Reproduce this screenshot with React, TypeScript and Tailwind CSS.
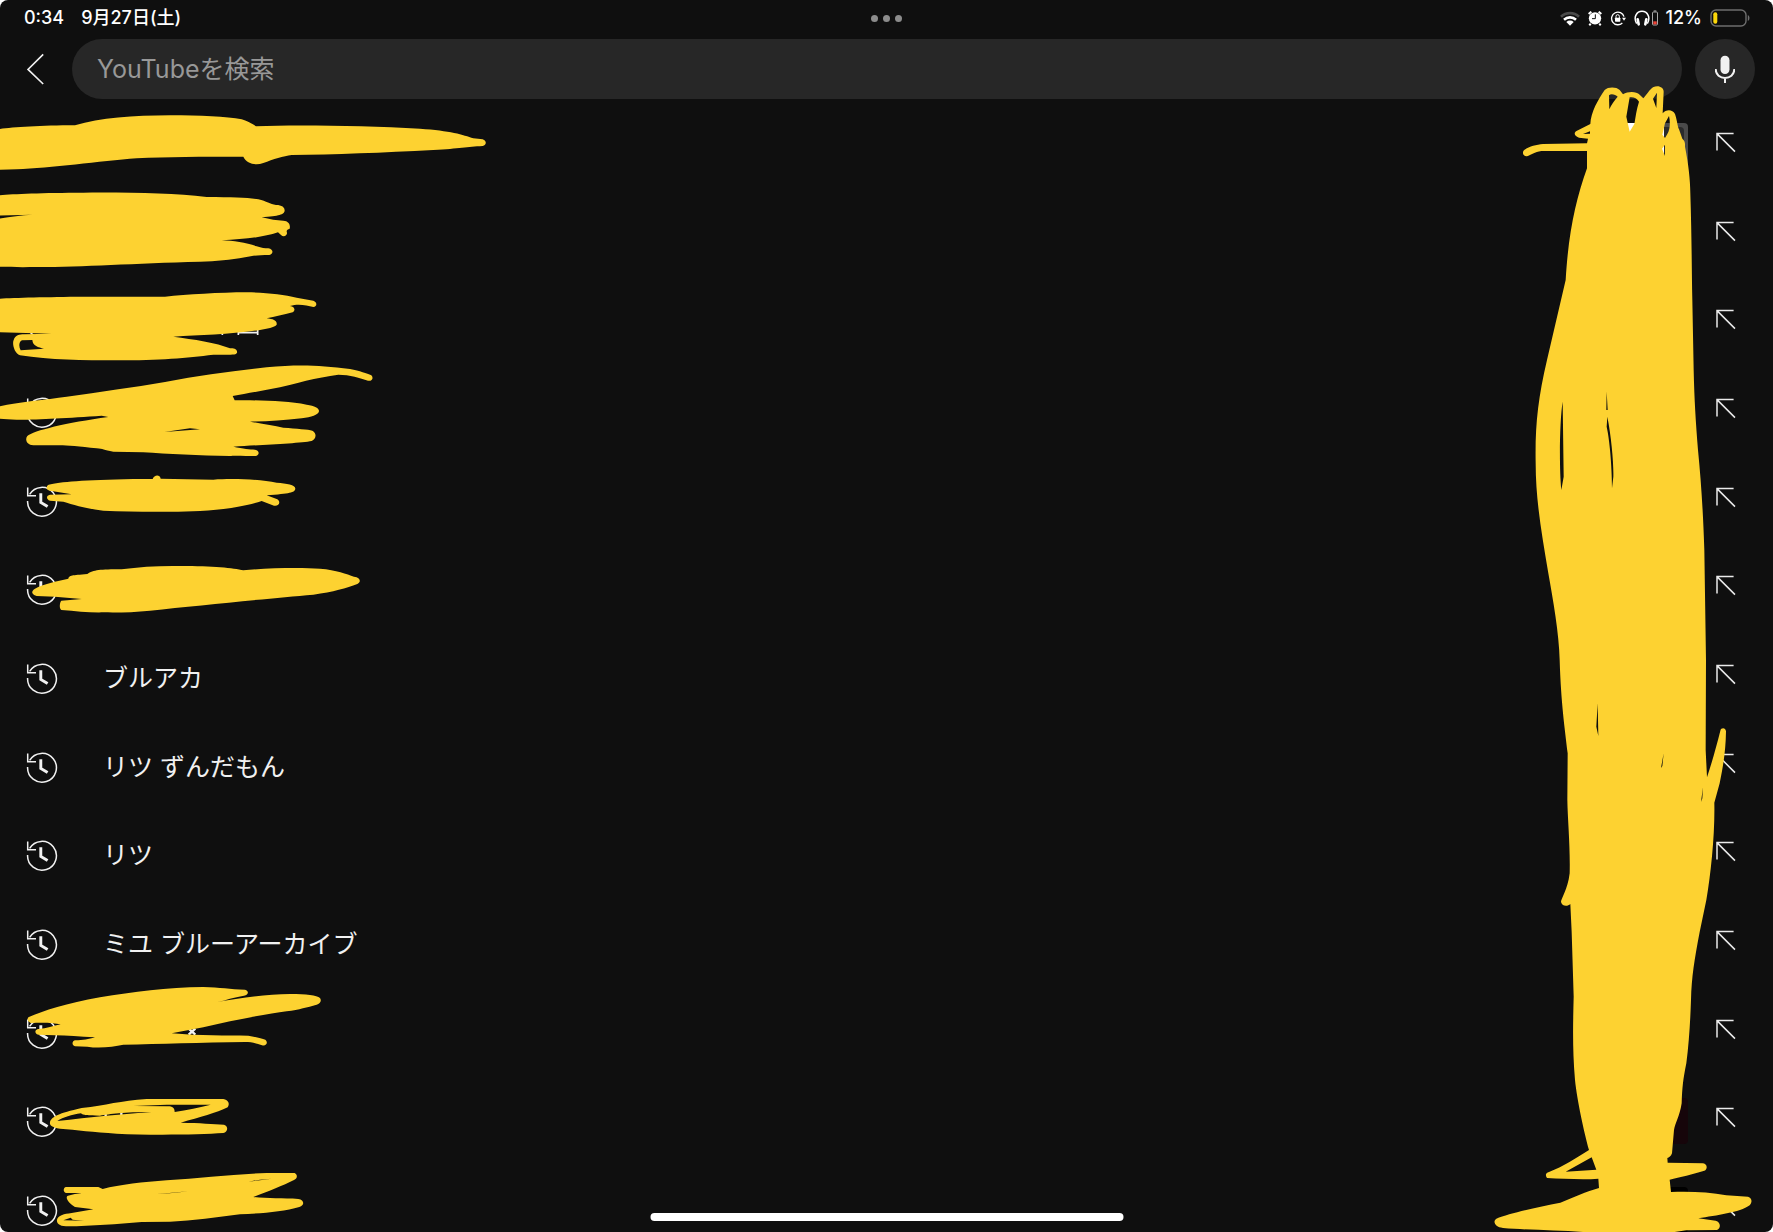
import React from "react";

type Suggestion = { text: string; hidden?: boolean; thumb?: "window" | "dark" | "black" };

const suggestions: Suggestion[] = [
  { text: "", hidden: true, thumb: "window" },
  { text: "", hidden: true },
  { text: "", hidden: true },
  { text: "", hidden: true },
  { text: "", hidden: true },
  { text: "", hidden: true },
  { text: "ブルアカ" },
  { text: "リツ ずんだもん" },
  { text: "リツ" },
  { text: "ミユ ブルーアーカイブ" },
  { text: "", hidden: true },
  { text: "", hidden: true, thumb: "dark" },
  { text: "", hidden: true, thumb: "black" },
];

function HistoryIcon() {
  return (
    <svg viewBox="0 0 32 32" className="size-8 shrink-0" fill="none" stroke="#f1f1f1" aria-hidden="true">
      <path d="M3.6 9.4A14.4 14.4 0 1 1 1.6 16" strokeWidth="1.5" />
      <path d="M1.7 2.6V10.8H10" strokeWidth="1.5" />
      <path d="M14.8 8.3V17.4L21.6 21.6" strokeWidth="2.9" />
    </svg>
  );
}

function InsertIcon() {
  return (
    <svg viewBox="0 0 28 28" className="size-7" fill="none" stroke="#eaeaea" strokeWidth="1.5" aria-hidden="true">
      <path d="M5 18.4V1.6H21.6M5 1.6L23 19.6" />
    </svg>
  );
}

function Thumb({ kind }: { kind: "window" | "dark" | "black" }) {
  if (kind === "window") {
    return (
      <div className="flex h-[46px] w-[82px] overflow-hidden rounded bg-[#4a4a4a]">
        <div className="w-[58px] bg-white" />
        <div className="mt-1 mr-1 grow rounded-tr bg-[#2b2b2b]" />
      </div>
    );
  }
  if (kind === "dark") return <div className="h-[46px] w-[82px] rounded bg-[#16050a]" />;
  return <div className="h-[46px] w-[82px] rounded bg-black" />;
}

function StatusBar() {
  return (
    <div className="grid h-9 grid-cols-3 items-center pr-[23px] pl-6 text-white">
      <div className="flex items-center gap-[17px] text-[18px] leading-6 font-medium">
        <span>0:34</span>
        <span>9月27日(土)</span>
      </div>
      <button aria-label="マルチタスク" className="flex justify-center gap-[5px]">
        <span className="size-[7px] rounded-full bg-[#8c8c8c]" />
        <span className="size-[7px] rounded-full bg-[#8c8c8c]" />
        <span className="size-[7px] rounded-full bg-[#8c8c8c]" />
      </button>
      <div className="flex items-center justify-end gap-2">
        <svg viewBox="0 0 60 45" className="h-[15px] w-5" fill="none" aria-hidden="true">
          <path d="M3 17A39 39 0 0 1 57 17" stroke="#4a4a4a" strokeWidth="8" />
          <path d="M12 26A27 27 0 0 1 48 26" stroke="#fff" strokeWidth="8" />
          <path d="M30 44L19 33A16 16 0 0 1 41 33Z" fill="#fff" />
        </svg>
        <svg viewBox="0 0 42 45" className="h-[15px] w-3.5" aria-hidden="true">
          <circle cx="21" cy="22" r="18.5" fill="#fff" />
          <path d="M2 9L10 2M32 2L40 9M8 38L4 43M34 38L38 43" stroke="#fff" strokeWidth="6" />
          <path d="M22 10V23H12" fill="none" stroke="#0f0f0f" strokeWidth="3" />
        </svg>
        <svg viewBox="0 0 48 45" className="h-[15px] w-4" fill="none" stroke="#fff" aria-hidden="true">
          <path d="M37 36A19 19 0 1 1 42 17" strokeWidth="4" />
          <path d="M36 20H48L42 29Z" fill="#fff" stroke="none" />
          <rect x="15" y="20" width="16" height="12" rx="2" fill="#fff" stroke="none" />
          <path d="M18 21V16A5 5 0 0 1 28 16V21" strokeWidth="3" />
        </svg>
        <div className="flex items-center gap-[2px]">
          <svg viewBox="0 0 48 48" className="size-4" fill="none" stroke="#fff" aria-hidden="true">
            <path d="M8 41C-3 22 8 4 24 4S51 22 40 41" strokeWidth="4.5" />
            <path d="M11 28L14 43M37 28L34 43" strokeWidth="8" strokeLinecap="round" />
          </svg>
          <svg viewBox="0 0 18 48" className="h-4 w-1.5" aria-hidden="true">
            <path d="M5 1H13V5H5Z" fill="#888" />
            <rect x="1.5" y="6" width="15" height="39" rx="3" fill="none" stroke="#aaa" strokeWidth="3" />
            <rect x="4" y="34" width="10" height="9" fill="#f04438" />
          </svg>
        </div>
        <div className="flex items-center gap-2 text-[18px] leading-6 font-medium">
          <span>12%</span>
          <svg viewBox="0 0 40 18" className="h-[18px] w-10" fill="none" aria-hidden="true">
            <rect x="1" y="1" width="35" height="16" rx="5" stroke="#6e6e6e" strokeWidth="1.4" />
            <rect x="3.3" y="3.3" width="4" height="11.4" rx="2" fill="#fbd60a" />
            <path d="M37.8 6C40 7 40 11 37.8 12Z" fill="#6e6e6e" />
          </svg>
        </div>
      </div>
    </div>
  );
}

function SearchHeader() {
  return (
    <header className="flex items-center pt-[3px] pr-[18px]">
      <button aria-label="戻る" className="flex h-[60px] w-[72px] items-center justify-center">
        <svg viewBox="0 0 20 32" className="h-8 w-5" fill="none" stroke="#f1f1f1" strokeWidth="1.6" aria-hidden="true">
          <path d="M17.2 1.4L2 16.4L17.2 31" />
        </svg>
      </button>
      <input
        type="search"
        aria-label="YouTubeを検索"
        placeholder="YouTubeを検索"
        className="h-[60px] min-w-0 grow rounded-full bg-[#272727] px-[25px] text-[25px] text-white outline-none placeholder:text-[#989898]"
      />
      <button aria-label="音声検索" className="ml-[13px] flex size-[60px] shrink-0 items-center justify-center rounded-full bg-[#272727]">
        <svg viewBox="0 0 60 84" className="h-7 w-5" fill="none" aria-hidden="true">
          <rect x="16.500" y="2" width="27" height="55" rx="13.500" fill="#f1f1f1" />
          <path d="M2 42C2 78 58 78 58 42M30 68V84" stroke="#f1f1f1" strokeWidth="6" />
        </svg>
      </button>
    </header>
  );
}

function LeftScribbles() {
  return (
    <svg viewBox="0 0 1500 3696" className="pointer-events-none absolute top-0 left-0 h-[1232px] w-[500px]" fill="#fdd231" fillRule="evenodd" aria-hidden="true">
      <g stroke="#f1f1f1" strokeWidth="5" fill="none">
        <path d="M667 994V1005M715 994V1005M773 990V1005M715 998H773" />
        <path d="M566 3086L586 3104M586 3086L566 3104" strokeWidth="7" />
        <path d="M317 3340V3354M364 3333V3347" strokeWidth="7" />
      </g>
      <path d="M-20 390C0 385 100 376 225 376C300 354 400 346 510 346C600 346 680 350 725 358C750 366 760 374 768 379C900 374 1100 378 1260 386C1350 392 1390 404 1420 415L1448 418C1461 422 1460 436 1448 438C1400 440 1380 446 1300 450C1150 458 1000 464 875 465C850 468 820 478 790 489C765 498 740 490 730 470C600 470 500 470 410 475C300 484 150 504 50 508L-20 510Z" />
      <g transform="translate(0 540)">
        <path d="M-20 48C0 44 100 38 250 38C400 37 520 40 620 51C700 52 745 52 775 58C800 64 810 72 828 75C846 75 854 82 854 92C852 104 838 107 785 112C810 118 830 122 850 122C866 123 872 134 869 146C862 148 858 152 861 158C862 168 850 172 843 165L834 157C790 172 730 178 665 181C700 182 740 188 770 199C785 204 795 205 805 205C822 208 820 223 808 225C775 225 760 227 735 232C690 240 650 244 600 245C400 250 250 261 110 261C60 262 20 261 -20 260ZM-5 107L98 104C60 106 30 110 -5 116Z" />
        <path d="M-20 358C0 354 120 351 250 350L495 350C560 344 660 337 740 337C800 337 850 344 890 353L940 362C952 366 952 380 940 381C920 376 895 370 870 378C885 380 887 392 878 397C850 404 825 410 800 415C820 417 832 422 830 434C824 442 800 446 780 450C700 462 600 466 520 470C580 478 650 488 690 505C705 504 713 510 711 518C708 525 700 524 640 524C560 534 480 541 350 541C250 541 150 540 60 526C42 520 36 490 41 480C46 466 58 463 72 463L155 461L-20 456ZM97 480L66 481C56 486 56 500 62 511L132 506C115 502 98 498 97 480Z" />
        <path d="M-20 684C30 668 130 660 200 650C300 636 400 622 495 606C600 586 700 573 800 562C900 552 960 556 1050 567C1080 573 1100 580 1114 586C1122 594 1116 604 1104 602C1080 594 1050 584 1015 584C950 592 880 612 840 622C790 632 740 640 698 648L704 661C780 660 860 663 920 674C945 678 958 684 957 694C954 706 935 711 905 715C850 722 800 724 750 725C790 732 820 738 850 743C890 746 925 748 937 752C952 760 948 778 935 783C900 790 780 795 700 800C730 806 750 808 765 809C780 812 778 826 768 828C740 828 700 826 690 828C600 827 500 822 430 817L340 815C310 811 310 806 290 805C240 800 200 796 180 796L100 796C80 795 74 778 82 768C100 752 200 728 325 711L305 707C200 714 100 720 50 719C20 718 0 716 -20 714ZM493 756L570 745L600 748Z" />
      </g>
      <g transform="translate(0 1380)">
        <path d="M146 74C180 66 250 60 400 57L458 57C462 44 480 42 482 56L640 59C700 55 780 58 830 68C860 70 886 74 886 86C884 98 870 100 800 106L832 118C844 126 836 140 822 137L785 123C740 138 680 148 600 153C500 157 400 156 310 152C260 146 220 134 190 125L150 122C138 118 138 106 150 104L215 103L150 92C136 90 138 78 146 74Z" />
        <path d="M105 386C130 372 170 364 205 356C208 346 215 346 262 342C280 330 300 328 365 328C420 320 480 317 540 318C640 318 700 324 730 331C800 324 900 322 960 326C1010 330 1040 342 1062 350C1082 352 1084 366 1072 372C1040 384 1000 396 940 404C800 416 600 436 450 452C400 457 350 458 310 457C270 458 230 454 184 450C176 444 180 426 184 422L245 417L165 410L110 408C92 404 94 392 105 386Z" />
      </g>
      <g transform="translate(0 2910)">
        <path d="M85 142C130 122 200 100 300 82C400 66 500 52 610 51C660 52 690 58 735 59C748 62 746 76 732 77C700 82 680 90 648 97C720 84 800 73 870 72C920 72 950 76 960 84C966 92 960 102 950 104C920 112 900 118 860 124C800 132 700 150 610 172L515 190C600 198 680 196 745 197C765 200 785 206 796 209C806 218 798 230 786 226C770 220 755 216 735 216C600 218 480 222 370 224C340 230 300 236 262 230L225 229C214 226 216 212 226 211C250 211 265 208 285 202C240 200 200 196 165 196L115 194C102 190 104 178 116 177C140 175 160 168 182 163C160 158 130 157 92 159C80 152 82 146 85 142Z" />
        <path d="M150 456C155 440 175 430 245 414C320 406 360 392 440 387L670 387C686 390 690 402 683 412C650 428 600 442 542 458C600 459 640 462 672 464C686 468 684 486 670 489C600 494 450 496 350 491C280 486 230 480 180 476C155 472 148 466 150 456ZM172 453C190 442 215 434 243 430C250 436 260 437 300 437C330 432 370 426 455 426C370 432 270 442 172 453ZM400 408L500 404L632 404C600 412 560 420 524 426C524 412 515 408 500 409Z" />
        <path d="M198 651L295 651L308 657C360 644 430 636 500 631C600 624 700 612 800 609L884 609C894 614 892 626 882 630C850 646 800 666 760 681C800 686 850 684 895 687C914 690 914 706 898 711C850 726 780 730 720 733C650 742 580 752 510 755L425 756C350 762 280 768 200 769C172 770 168 754 172 746C178 736 190 732 215 729L280 718L225 711C205 700 196 684 202 678C215 674 235 670 245 669L198 669C188 666 190 652 198 651ZM435 673C480 673 520 668 565 664C520 669 480 673 435 673ZM745 635L780 629L815 626Z M190 751L212 743L218 749L252 752Z" />
      </g>
    </svg>
  );
}

function RightScribble() {
  return (
    <svg viewBox="0 0 900 3696" className="pointer-events-none absolute top-0 right-0 h-[1232px] w-[300px]" fill="#fdd231" fillRule="evenodd" aria-hidden="true">
      <path
        d="M352 372C354 335 375 300 395 270C405 260 430 260 440 270L450 283C465 274 490 274 500 284L511 295C520 286 530 268 540 262C556 254 572 262 572 275L569 340C578 328 598 326 606 342C612 360 614 380 618 388L628 416C638 424 636 435 636 440C646 490 652 540 652 580C656 700 656 800 658 900L662 1110C664 1200 668 1260 675 1350C684 1440 690 1530 694 1650L699 1980L698 2250L702 2332C716 2290 730 2240 742 2192C744 2182 758 2182 759 2194C758 2250 752 2290 740 2350L724 2408C726 2500 714 2620 700 2700L680 2796C664 2880 656 2930 654 3000C652 3060 648 3130 640 3190C630 3240 628 3260 626 3310C620 3350 606 3370 603 3390L597 3460C594 3470 588 3472 583 3474L584 3488L690 3490C704 3492 704 3508 694 3512C660 3522 620 3532 590 3539L594 3576C650 3574 710 3576 760 3586L825 3590C838 3594 838 3608 830 3616C800 3638 730 3646 676 3655L728 3662C744 3666 744 3686 732 3690L640 3691L605 3696L330 3696C250 3690 160 3690 90 3684C66 3682 58 3664 70 3656C110 3640 190 3622 262 3608C300 3594 340 3574 378 3564L376 3536C330 3540 270 3536 222 3534C216 3526 218 3518 228 3516C270 3500 310 3474 348 3450C334 3400 312 3300 306 3240C298 3150 300 3070 302 2990L296 2796L292 2712C284 2720 268 2720 264 2706C264 2696 284 2670 290 2620C292 2540 284 2460 283 2400L284 2260C276 2190 264 2110 260 1980C258 1900 240 1800 226 1720C206 1600 188 1500 188 1390C186 1280 194 1200 222 1080L278 840C286 700 308 600 342 505L342 453L205 453C185 456 174 464 162 469C150 470 146 456 154 450C170 438 190 434 210 432L342 430L345 416L318 413C302 408 302 396 312 392ZM408 286C414 280 428 284 434 290C424 302 414 316 409 328ZM470 292C480 290 492 294 498 305C490 330 488 350 484 372L470 395L460 350ZM540 296L552 278L550 324ZM588 348C592 364 592 388 583 402L576 414L568 404L576 370ZM567 446L576 434L576 468ZM330 402L351 394V401ZM278 3515L356 3472L370 3509ZM269 1205L272 1430L265 1470C258 1400 260 1260 269 1205ZM401 1175L404 1230L400 1230ZM403 1250C415 1310 422 1390 421 1430L417 1465C417 1400 410 1320 401 1280ZM374 2110L376 2208L370 2180ZM572 2260L568 2298L564 2304ZM690 2362L688 2395L684 2406Z"
      />
    </svg>
  );
}

export default function App() {
  return (
    <div className="h-screen overflow-hidden bg-white">
      <div
        lang="ja"
        className="relative h-full overflow-hidden rounded-lg bg-[#0f0f0f] font-['Inter','Noto_Sans_CJK_JP',sans-serif] text-[#f1f1f1]"
      >
        <StatusBar />
        <SearchHeader />
        <ul className="pt-[2px]">
          {suggestions.map((s, i) => (
            <li key={i} className="flex h-[89px] items-center pr-[33px] pl-[26px] nth-[3n]:h-[88px]">
              <button aria-label={s.hidden ? "検索履歴" : undefined} className="flex grow items-center gap-[45px] text-left text-[25px] leading-9">
                <HistoryIcon />
                <span className="grow">{s.text}</span>
                {s.thumb && <Thumb kind={s.thumb} />}
              </button>
              <button aria-label="検索ボックスに入力" className="ml-6 shrink-0">
                <InsertIcon />
              </button>
            </li>
          ))}
        </ul>
        <LeftScribbles />
        <RightScribble />
        <div className="absolute bottom-[11px] left-1/2 h-2 w-[473px] -translate-x-1/2 rounded-full bg-white" />
      </div>
    </div>
  );
}
